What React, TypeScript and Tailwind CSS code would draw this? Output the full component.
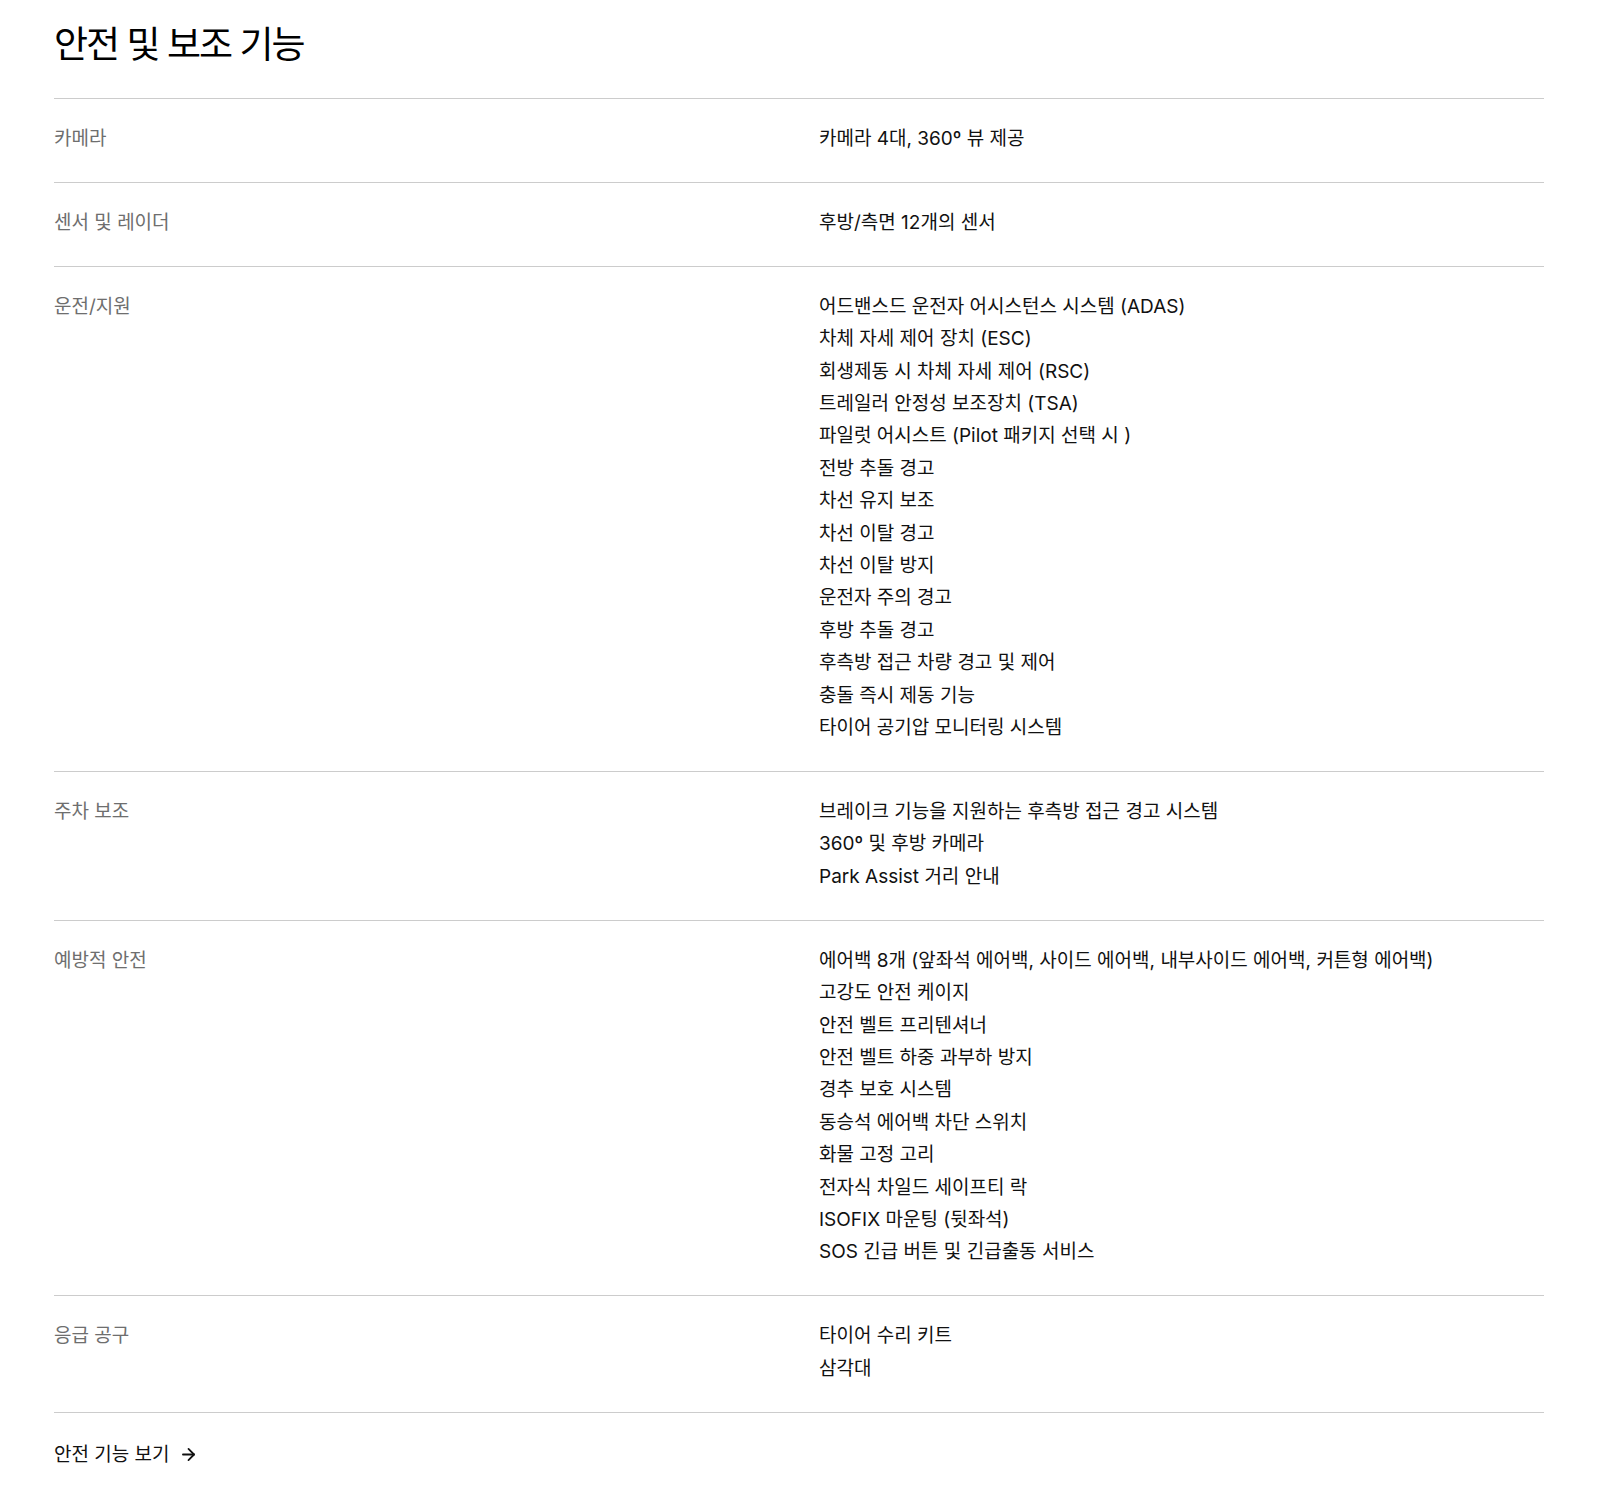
import { ArrowRight } from 'lucide-react';

const rows: { label: string; items: string[] }[] = [
  { label: '카메라', items: ['카메라 4대, 360º 뷰 제공'] },
  { label: '센서 및 레이더', items: ['후방/측면 12개의 센서'] },
  {
    label: '운전/지원',
    items: [
      '어드밴스드 운전자 어시스턴스 시스템 (ADAS)',
      '차체 자세 제어 장치 (ESC)',
      '회생제동 시 차체 자세 제어 (RSC)',
      '트레일러 안정성 보조장치 (TSA)',
      '파일럿 어시스트 (Pilot 패키지 선택 시 )',
      '전방 추돌 경고',
      '차선 유지 보조',
      '차선 이탈 경고',
      '차선 이탈 방지',
      '운전자 주의 경고',
      '후방 추돌 경고',
      '후측방 접근 차량 경고 및 제어',
      '충돌 즉시 제동 기능',
      '타이어 공기압 모니터링 시스템',
    ],
  },
  {
    label: '주차 보조',
    items: ['브레이크 기능을 지원하는 후측방 접근 경고 시스템', '360º 및 후방 카메라', 'Park Assist 거리 안내'],
  },
  {
    label: '예방적 안전',
    items: [
      '에어백 8개 (앞좌석 에어백, 사이드 에어백, 내부사이드 에어백, 커튼형 에어백)',
      '고강도 안전 케이지',
      '안전 벨트 프리텐셔너',
      '안전 벨트 하중 과부하 방지',
      '경추 보호 시스템',
      '동승석 에어백 차단 스위치',
      '화물 고정 고리',
      '전자식 차일드 세이프티 락',
      'ISOFIX 마운팅 (뒷좌석)',
      'SOS 긴급 버튼 및 긴급출동 서비스',
    ],
  },
  { label: '응급 공구', items: ['타이어 수리 키트', '삼각대'] },
];

export default function App() {
  return (
    <div
      className="min-h-screen bg-white pl-[54px] pr-[56px] pt-[22px] pb-10 text-black"
      style={{ fontFamily: 'Inter, "Noto Sans CJK KR", sans-serif' }}
    >
      <h1 className="text-[37px] leading-[46px] font-normal tracking-[-2px]">안전 및 보조 기능</h1>

      <div className="mt-[30px] border-t border-[#cccccc]">
        {rows.map((row) => (
          <div key={row.label} className="grid grid-cols-2 gap-x-10 border-b border-[#cccccc] pt-6 pb-[26.5px]">
            <div className="text-[19px] leading-[32.4px] text-[#6e6e6e]">{row.label}</div>
            <ul className="text-[19px] leading-[32.4px] text-[#111111]">
              {row.items.map((item) => (
                <li key={item}>{item}</li>
              ))}
            </ul>
          </div>
        ))}
      </div>

      <a href="#" className="mt-[26px] inline-flex items-center gap-[9px] text-[19px] leading-[32px] text-[#111111]">
        안전 기능 보기
        <ArrowRight className="w-[19px] h-[19px]" strokeWidth={2.25} />
      </a>
    </div>
  );
}
